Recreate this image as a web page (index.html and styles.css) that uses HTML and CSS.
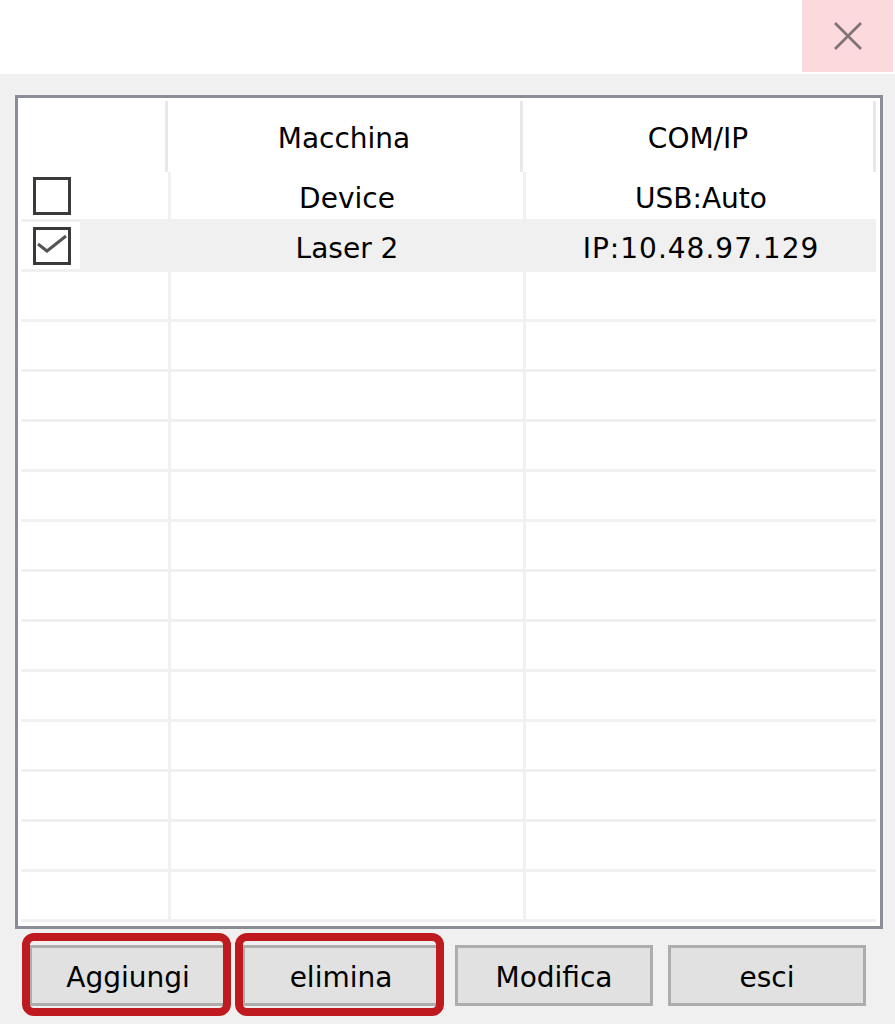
FILE: index.html
```html
<!DOCTYPE html>
<html lang="it">
<head>
    <meta charset="UTF-8">
    <title>Macchine</title>
    <link rel="stylesheet" href="styles.css">
</head>
<body>
    <div class="titlebar">
        <button class="close" title="Chiudi">
            <svg width="30" height="30" viewBox="0 0 30 30">
                <path d="M2 2 L28 28 M28 2 L2 28" stroke="#7d7374" stroke-width="2.6" fill="none"/>
            </svg>
        </button>
    </div>

    <main class="content">
        <div class="list">
            <div class="list-head">
                <div class="hcell col-check"></div>
                <div class="hcell col-name">Macchina</div>
                <div class="hcell col-port">COM/IP</div>
            </div>
            <div class="list-body" id="rows"></div>
        </div>

        <div class="buttons">
            <button class="btn marked">Aggiungi</button>
            <button class="btn marked">elimina</button>
            <button class="btn">Modifica</button>
            <button class="btn">esci</button>
        </div>
    </main>

    <script>
        const machines = [
            { name: 'Device', port: 'USB:Auto', checked: false },
            { name: 'Laser 2', port: 'IP:10.48.97.129', checked: true }
        ];
        const totalRows = 15;

        function buildRows() {
            const body = document.getElementById('rows');
            for (let i = 0; i < totalRows; i++) {
                const m = machines[i];
                const row = document.createElement('div');
                row.className = 'row' + (m && m.checked ? ' selected' : '');

                let check = '';
                if (m) {
                    check = m.checked
                        ? '<span class="box"><svg width="32" height="32" viewBox="0 0 32 32"><path d="M2 14 L11 21 L30 6" stroke="#555" stroke-width="3" fill="none"/></svg></span>'
                        : '<span class="box"></span>';
                }
                row.innerHTML =
                    '<div class="cell col-check"><div class="check-wrap">' + check + '</div></div>' +
                    '<div class="cell col-name">' + (m ? m.name : '') + '</div>' +
                    '<div class="cell col-port' + (m && m.port.startsWith('IP') ? ' ip' : '') + '">' + (m ? m.port : '') + '</div>';
                body.appendChild(row);
            }
        }

        buildRows();
    </script>
</body>
</html>
```

FILE: styles.css
```css
/* Window */
body {
    margin: 0;
    padding: 0;
    background-color: #f0f0f0;
    font-family: "DejaVu Sans", Verdana, sans-serif;
    font-size: 28px;
    color: #000;
    height: 1024px;
    overflow: hidden;
}

.titlebar {
    height: 74px;
    background-color: #fff;
    display: flex;
    justify-content: flex-end;
    align-items: flex-start;
}

.close {
    width: 91px;
    height: 72px;
    margin-right: 2px;
    border: none;
    padding: 0;
    background-color: #fcd9dd;
    display: flex;
    align-items: center;
    justify-content: center;
}

.content {
    padding: 21px 12px 0 15px;
}

/* List view */
.list {
    height: 834px;
    box-sizing: border-box;
    border: 3px solid #8a8d95;
    background-color: #fff;
}

.list-head {
    display: flex;
    height: 74px;
}

.hcell {
    margin-top: 3px;
    padding-top: 3px;
    box-sizing: border-box;
    border-right: 3px solid #e8e8e8;
    display: flex;
    align-items: center;
    justify-content: center;
}

.hcell.col-check { width: 150px; }
.hcell.col-name { width: 355px; }
.hcell.col-port { width: 353px; }

.list-body {
    padding-left: 3px;
}

.row {
    display: flex;
    width: 855px;
    height: 50px;
    box-sizing: border-box;
    border-bottom: 3px solid #f0f0f0;
}

.row.selected {
    background-color: #f0f0f0;
}

.cell {
    box-sizing: border-box;
    padding-top: 5px;
    display: flex;
    align-items: center;
    justify-content: center;
}

.cell.col-check {
    width: 150px;
    padding-top: 0;
    border-right: 3px solid #f0f0f0;
    justify-content: flex-start;
}

.cell.col-name {
    width: 355px;
    border-right: 3px solid #f0f0f0;
}

.cell.col-port {
    width: 350px;
}

.cell.ip {
    letter-spacing: 1px;
}

.check-wrap {
    width: 59px;
    height: 100%;
    background-color: #fff;
    display: flex;
    align-items: center;
}

.box {
    width: 38px;
    height: 38px;
    margin-left: 12px;
    box-sizing: border-box;
    border: 3px solid #3a3a3a;
    background-color: #fff;
    display: flex;
}

/* Buttons */
.buttons {
    display: flex;
    gap: 15px;
    padding: 16px 0 0 14px;
}

.btn {
    position: relative;
    width: 198px;
    height: 61px;
    border: 3px solid #adadad;
    background-color: #e1e1e1;
    font-family: "DejaVu Sans", Verdana, sans-serif;
    font-size: 28px;
    color: #000;
    padding: 4px 0 0 0;
}

/* red annotation frame */
.btn.marked::after {
    content: "";
    position: absolute;
    top: -15px;
    bottom: -13px;
    left: -10px;
    right: -7px;
    border: 8px solid #be1a1f;
    border-radius: 12px;
    pointer-events: none;
}
```
